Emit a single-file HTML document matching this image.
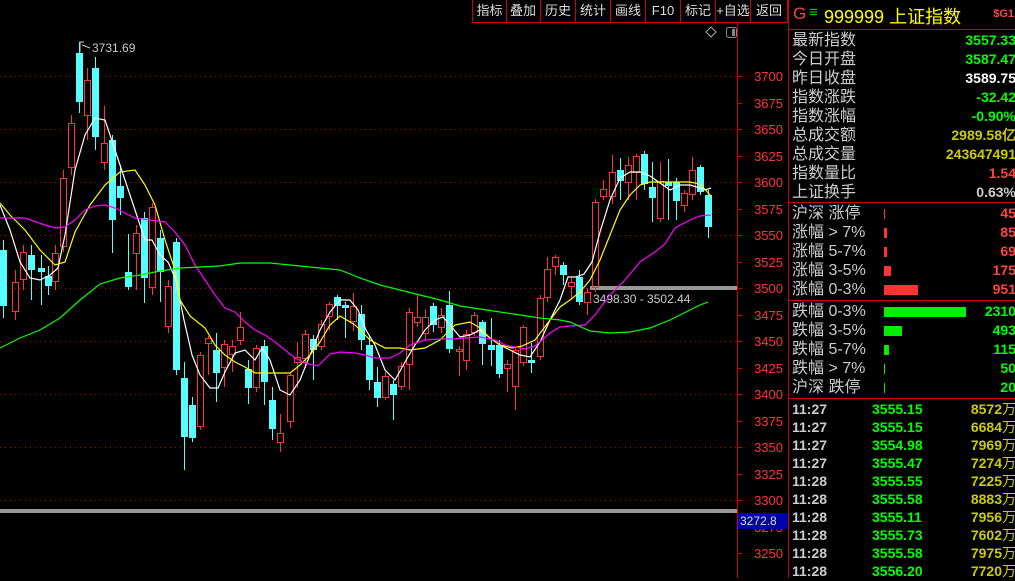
<!DOCTYPE html>
<html><head><meta charset="utf-8"><style>
body{margin:0;width:1015px;height:578px;background:#000;overflow:hidden;font-family:"Liberation Sans","Noto Sans CJK SC",sans-serif;position:relative}
.tb{position:absolute;top:0;height:22px;border-right:1px solid #c00;border-bottom:1px solid #c00;color:#ddd;font-size:13px;line-height:22px;text-align:center}
.rp{position:absolute;left:788px;top:0;width:227px;height:578px;border-left:1px solid #c00}
.row{position:absolute;left:3px;right:0;height:19px;font-size:16px;line-height:19px;color:#ccc}
.row b{position:absolute;right:0;top:0;font-size:14px;font-family:"Liberation Sans",sans-serif;}
.hl{position:absolute;left:0;right:0;height:1px;background:#c00}
.bar{position:absolute;left:92px;top:5px;height:10px}
.tk{position:absolute;left:3px;right:0;height:18px;font-size:14px;line-height:18px;font-weight:bold;font-family:"Liberation Sans",sans-serif}
</style></head><body>
<div class="tb" style="left:472px;width:33px;border-left:1px solid #c00">指标</div>
<div class="tb" style="left:506px;width:34px">叠加</div>
<div class="tb" style="left:541px;width:34px">历史</div>
<div class="tb" style="left:576px;width:34px">统计</div>
<div class="tb" style="left:611px;width:34px">画线</div>
<div class="tb" style="left:646px;width:34px">F10</div>
<div class="tb" style="left:681px;width:34px">标记</div>
<div class="tb" style="left:716px;width:34px">+自选</div>
<div class="tb" style="left:751px;width:36px">返回</div>
<svg id="ch" width="788" height="578" style="position:absolute;left:0;top:0"></svg>
<div class="rp">
<div style="position:absolute;left:4px;top:4px;font-size:17px;color:#ff4040">G</div>
<div style="position:absolute;left:20px;top:4px;font-size:15px;color:#0c0">≡</div>
<div style="position:absolute;left:35px;top:3px;font-size:18px;color:#ff0">999999 上证指数</div>
<div style="position:absolute;right:2px;top:8px;font-size:11px;color:#f44;font-weight:bold">$G1</div>
<div class="hl" style="top:29px"></div>
<div class="row" style="top:31px">最新指数<b style="color:#0f0">3557.33</b></div>
<div class="row" style="top:50px">今日开盘<b style="color:#0f0">3587.47</b></div>
<div class="row" style="top:69px">昨日收盘<b style="color:#fff">3589.75</b></div>
<div class="row" style="top:88px">指数涨跌<b style="color:#0f0">-32.42</b></div>
<div class="row" style="top:107px">指数涨幅<b style="color:#0f0">-0.90%</b></div>
<div class="row" style="top:126px">总成交额<b style="color:#cc0">2989.58亿</b></div>
<div class="row" style="top:145px">总成交量<b style="color:#cc0">243647491</b></div>
<div class="row" style="top:164px">指数量比<b style="color:#f44">1.54</b></div>
<div class="row" style="top:183px">上证换手<b style="color:#ccc">0.63%</b></div>
<div class="hl" style="top:202px"></div>
<div class="row" style="top:204px">沪深 涨停<span class="bar" style="width:1px;background:#f33"></span><b style="color:#f44">45</b></div>
<div class="row" style="top:223px">涨幅 &gt; 7%<span class="bar" style="width:3px;background:#f33"></span><b style="color:#f44">85</b></div>
<div class="row" style="top:242px">涨幅 5-7%<span class="bar" style="width:3px;background:#f33"></span><b style="color:#f44">69</b></div>
<div class="row" style="top:261px">涨幅 3-5%<span class="bar" style="width:7px;background:#f33"></span><b style="color:#f44">175</b></div>
<div class="row" style="top:280px">涨幅 0-3%<span class="bar" style="width:34px;background:#f33"></span><b style="color:#f44">951</b></div>
<div class="hl" style="top:300px"></div>
<div class="row" style="top:302px">跌幅 0-3%<span class="bar" style="width:82px;background:#0e0"></span><b style="color:#0f0">2310</b></div>
<div class="row" style="top:321px">跌幅 3-5%<span class="bar" style="width:18px;background:#0e0"></span><b style="color:#0f0">493</b></div>
<div class="row" style="top:340px">跌幅 5-7%<span class="bar" style="width:5px;background:#0e0"></span><b style="color:#0f0">115</b></div>
<div class="row" style="top:359px">跌幅 &gt; 7%<span class="bar" style="width:1px;background:#0e0"></span><b style="color:#0f0">50</b></div>
<div class="row" style="top:378px">沪深 跌停<span class="bar" style="width:1px;background:#0e0"></span><b style="color:#0f0">20</b></div>
<div class="hl" style="top:398px"></div>
<div id="ticks"></div>
</div>
<script>
var T=[["11:27","3555.15","8572"],["11:27","3555.15","6684"],["11:27","3554.98","7969"],["11:27","3555.47","7274"],["11:28","3555.55","7225"],["11:28","3555.58","8883"],["11:28","3555.11","7956"],["11:28","3555.73","7602"],["11:28","3555.58","7975"],["11:28","3556.20","7720"]];
var h="";T.forEach(function(t,i){h+='<div class="tk" style="top:'+(400+i*18)+'px"><span style="color:#ccc">'+t[0]+'</span><span style="position:absolute;left:80px;color:#0f0">'+t[1]+'</span><span style="position:absolute;right:0;color:#cc0">'+t[2]+'<span style="font-weight:normal;font-family:Noto Sans CJK SC">万</span></span></div>'});
document.getElementById('ticks').innerHTML=h;
var s="";
for(var g=0;g<9;g++){var y=76+g*53;s+='<line x1="0" y1="'+y+'.5" x2="736" y2="'+y+'.5" stroke="#a00" stroke-dasharray="1 4"/>';}
s+='<line x1="737.5" y1="22" x2="737.5" y2="578" stroke="#c00"/>';
for(var p=3700;p>=3250;p-=25){var y=Math.round(76+(3700-p)*1.06);s+='<line x1="737" y1="'+y+'.5" x2="742" y2="'+y+'.5" stroke="#c00"/><text x="783" y="'+(y+5)+'" text-anchor="end" fill="#f33" font-size="13" font-family="Liberation Sans">'+p+'</text>';}
s+='<rect x="0" y="509" width="737" height="4" fill="#999"/><rect x="738" y="513" width="50" height="16" fill="#00a"/><text x="740" y="525" fill="#ddd" font-size="12" font-family="Liberation Sans">3272.8</text>';
s+='<rect x="590" y="286" width="147" height="4" fill="#999"/><text x="593" y="303" fill="#ccc" font-size="12" font-family="Liberation Sans">3498.30 - 3502.44</text>';
s+='<text x="92" y="52" fill="#ccc" font-size="12" font-family="Liberation Sans">3731.69</text><path d="M80 52V42h4M82 45l8 3" stroke="#ccc" fill="none"/>';
s+='<path d="M711 27l5 5-5 5-5-5z" stroke="#aaa" fill="none"/><rect x="726.5" y="27.5" width="10" height="10" rx="2" stroke="#888" fill="none"/><rect x="732" y="29" width="3" height="7" fill="#888"/>';
var C=[[0,250,306,240,318,0],[12,282,312,270,320,1],[20,252,280,245,290,1],[28,255,270,245,300,0],[38,268,272,255,305,0],[45,276,286,266,295,0],[52,253,282,245,290,1],[60,178,247,170,252,1],[68,123,168,115,175,1],[76,53,102,42,113,0],[84,80,116,68,140,1],[92,68,137,57,150,0],[101,143,163,106,170,1],[109,140,220,135,253,0],[117,186,198,165,215,0],[125,272,287,234,290,0],[133,233,254,225,290,1],[141,218,278,212,303,0],[149,207,288,203,295,1],[157,238,272,230,302,0],[165,286,327,280,333,1],[173,242,370,238,375,0],[181,378,437,362,470,0],[189,405,438,397,442,0],[197,355,427,352,430,1],[205,338,344,336,375,1],[213,350,373,333,402,0],[221,344,368,340,387,1],[229,346,355,340,372,1],[237,327,341,312,345,1],[245,369,388,360,404,0],[253,348,388,345,392,1],[261,346,382,340,405,0],[269,400,429,387,440,0],[277,433,443,414,452,1],[287,375,422,372,428,1],[294,357,363,342,388,1],[302,334,359,330,368,1],[310,339,350,335,380,0],[318,324,347,320,350,1],[326,304,317,302,330,1],[334,297,306,295,320,0],[342,305,308,302,338,0],[350,306,322,293,331,1],[358,314,340,305,350,0],[366,345,380,335,390,0],[374,382,398,367,407,0],[382,376,398,372,400,1],[390,384,395,380,420,0],[398,366,387,362,390,1],[406,312,365,308,390,1],[414,317,323,295,327,1],[422,317,334,309,340,1],[430,306,325,303,332,0],[438,315,328,308,333,1],[446,305,349,291,353,0],[456,349,352,346,376,1],[463,334,361,330,370,1],[471,315,333,312,336,1],[479,322,344,320,365,0],[488,345,350,318,366,0],[496,345,374,340,378,0],[504,364,369,360,392,1],[512,350,387,347,410,1],[520,327,363,325,366,1],[528,360,363,343,373,0],[537,298,357,295,360,1],[544,269,298,257,302,1],[552,257,267,255,275,1],[560,265,275,262,285,0],[568,282,287,278,300,1],[576,277,302,270,305,0],[584,292,303,288,315,1],[592,202,288,199,292,1],[600,189,197,180,200,1],[609,172,197,155,204,1],[617,170,181,158,200,0],[625,165,183,157,200,1],[633,156,173,154,200,1],[641,154,184,151,190,0],[649,187,198,162,222,0],[657,181,219,162,222,1],[665,182,186,159,220,0],[673,182,201,178,220,0],[681,193,206,190,212,1],[689,170,195,157,200,1],[697,167,192,165,195,0],[705,195,227,190,238,0]];
C.forEach(function(c){var x=c[0],w=7,m=x+3.5;
if(c[5]){s+='<line x1="'+m+'" y1="'+c[3]+'" x2="'+m+'" y2="'+c[1]+'" stroke="#f33"/><line x1="'+m+'" y1="'+c[2]+'" x2="'+m+'" y2="'+c[4]+'" stroke="#f33"/><rect x="'+(x+0.5)+'" y="'+(c[1]+0.5)+'" width="'+(w-1)+'" height="'+Math.max(1,c[2]-c[1]-1)+'" fill="none" stroke="#f33"/>';}
else{s+='<line x1="'+m+'" y1="'+c[3]+'" x2="'+m+'" y2="'+c[4]+'" stroke="#5ff"/><rect x="'+x+'" y="'+c[1]+'" width="'+w+'" height="'+Math.max(1,c[2]-c[1])+'" fill="#5ff"/>';}});
function pl(a,col){s+='<polyline fill="none" stroke="'+col+'" stroke-width="1.2" points="'+a+'"/>';}
pl("0,205 10,230 20,262 30,278 40,280 50,275 58,268 65,235 75,170 85,135 95,118 105,120 115,150 125,180 135,210 145,240 152,240 160,255 168,262 176,280 184,320 192,355 200,375 210,388 218,388 225,372 235,353 245,350 255,360 262,348 270,360 280,390 290,395 300,380 310,355 320,330 330,312 340,300 350,300 358,310 366,330 375,345 385,370 395,380 405,362 415,345 425,330 435,320 443,317 450,325 460,337 470,335 480,330 490,338 500,345 510,350 520,355 530,357 540,342 550,320 560,300 568,277 576,277 584,274 592,262 600,232 610,200 620,178 630,172 640,172 650,176 660,183 670,190 680,185 690,185 700,188 705,190 711,188","#fff");
pl("0,203 10,215 25,230 40,250 55,265 65,262 75,232 90,205 105,185 120,172 135,170 145,185 155,205 165,240 175,270 180,300 190,316 205,328 215,345 225,355 235,362 245,367 255,373 265,373 280,373 290,373 300,365 310,355 320,342 330,325 340,316 355,325 370,340 385,348 400,348 410,350 425,348 440,340 455,325 470,322 480,328 490,338 500,345 512,348 522,346 535,340 550,320 560,307 570,300 580,292 590,280 600,260 610,235 620,210 630,195 640,185 650,182 670,182 690,182 700,184 711,196","#ff0");
pl("0,218 25,218 45,225 55,228 65,227 75,220 85,210 95,206 105,205 115,208 125,213 135,218 150,220 165,222 175,232 185,245 195,265 205,280 215,295 225,308 235,312 245,322 255,330 265,335 275,342 285,350 295,358 305,363 318,366 330,354 340,352 355,353 365,355 375,358 390,358 400,353 410,345 425,340 440,339 455,339 465,338 480,337 495,340 505,345 515,347 525,349 535,346 550,333 560,327 570,326 585,325 595,315 610,295 625,280 640,262 655,252 665,244 675,228 690,220 700,216 711,215","#f0f");
pl("0,348 20,338 40,330 60,318 80,300 90,292 100,284 120,278 140,275 160,271 180,268 200,267 220,266 240,263 270,263 300,266 320,268 340,270 360,278 380,285 400,290 420,295 440,300 460,306 480,309 500,312 520,315 540,318 560,320 570,322 590,331 610,333 630,332 650,328 670,320 690,310 700,305 708,302","#0f0");
document.getElementById('ch').innerHTML=s;
</script>
</body></html>
